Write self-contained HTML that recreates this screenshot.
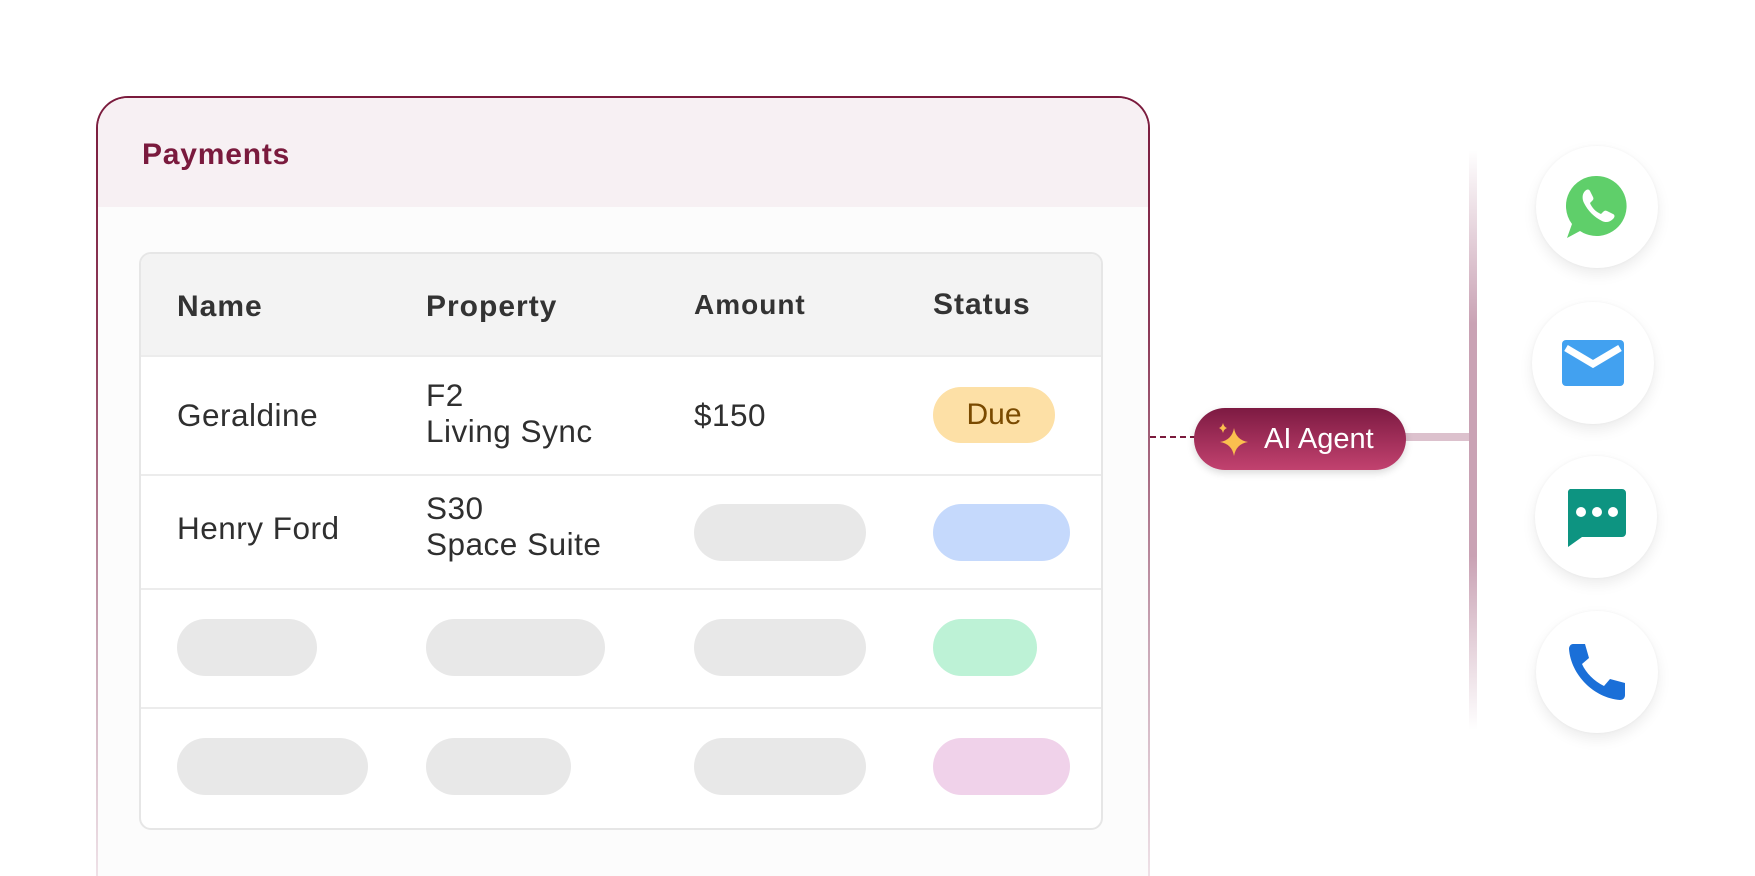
<!DOCTYPE html>
<html><head><style>
*{margin:0;padding:0;box-sizing:border-box}
html,body{width:1755px;height:876px;overflow:hidden}
body{background:#fff;position:relative;font-family:"Liberation Sans",Arial,sans-serif;color:#2f2f2f}
.card{position:absolute;left:96px;top:96px;width:1054px;height:782px;border-radius:32px 32px 0 0;padding:2px 2px 0 2px;background:linear-gradient(#7a1a3c 0%,#8c3a58 30%,#c9a7b6 70%,#efe2e8 100%)}
.cin{width:100%;height:100%;border-radius:30px 30px 0 0;background:#fcfcfc;overflow:hidden;position:relative}
.hdr{height:109px;background:#f7f0f3;position:relative}
.hdr span{position:absolute;left:44px;top:40px;font-size:30px;font-weight:bold;color:#7a1a3d;letter-spacing:0.8px}
.tbl{position:absolute;left:139px;top:252px;width:964px;height:578px;border:2px solid #e6e6e6;border-radius:12px;background:#fff;overflow:hidden}
.row{position:absolute;left:0;width:100%;border-top:2px solid #ececec}
.t{position:absolute;font-size:31.5px;line-height:36px;color:#2f2f2f;letter-spacing:0.5px}
.th{font-weight:bold;color:#333;font-size:30px;letter-spacing:1px}
.p{position:absolute;height:57px;border-radius:29px;background:#e8e8e8}
.circ{position:absolute;width:122px;height:122px;border-radius:50%;background:#fff;box-shadow:0 6px 14px rgba(0,0,0,.08),0 0 3px rgba(0,0,0,.04);display:flex;align-items:center;justify-content:center}
</style></head><body>
<div class="card"><div class="cin"><div class="hdr"><span>Payments</span></div></div></div>
<div class="tbl">
 <div style="position:absolute;left:0;top:0;width:100%;height:101px;background:#f3f3f3"></div>
 <div class="t th" style="left:36px;top:35px">Name</div>
 <div class="t th" style="left:285px;top:35px">Property</div>
 <div class="t th" style="left:553px;top:33px;font-size:28px">Amount</div>
 <div class="t th" style="left:792px;top:33px">Status</div>
 <div class="row" style="top:101px;height:119px">
  <div class="t" style="left:36px;top:40px">Geraldine</div>
  <div class="t" style="left:285px;top:20px">F2<br>Living Sync</div>
  <div class="t" style="left:553px;top:40px">$150</div>
  <div class="p" style="left:792px;top:30px;width:122px;height:56px;background:#fde0a6;color:#7a4a00;font-size:30px;text-align:center;line-height:56px">Due</div>
 </div>
 <div class="row" style="top:220px;height:114px">
  <div class="t" style="left:36px;top:34px">Henry Ford</div>
  <div class="t" style="left:285px;top:14px">S30<br>Space Suite</div>
  <div class="p" style="left:553px;top:28px;width:172px"></div>
  <div class="p" style="left:792px;top:28px;width:137px;background:#c5d9fc"></div>
 </div>
 <div class="row" style="top:334px;height:119px">
  <div class="p" style="left:36px;top:29px;width:140px"></div>
  <div class="p" style="left:285px;top:29px;width:179px"></div>
  <div class="p" style="left:553px;top:29px;width:172px"></div>
  <div class="p" style="left:792px;top:29px;width:104px;background:#bdf2d6"></div>
 </div>
 <div class="row" style="top:453px;height:125px">
  <div class="p" style="left:36px;top:29px;width:191px"></div>
  <div class="p" style="left:285px;top:29px;width:145px"></div>
  <div class="p" style="left:553px;top:29px;width:172px"></div>
  <div class="p" style="left:792px;top:29px;width:137px;background:#f0d2ea"></div>
 </div>
</div>
<div style="position:absolute;left:1150px;top:436px;width:46px;border-top:2px dashed #7a1a3c"></div>
<div style="position:absolute;left:1400px;top:433px;width:75px;height:8px;background:#dcc1cd"></div>
<div style="position:absolute;left:1469px;top:150px;width:8px;height:580px;background:linear-gradient(rgba(200,160,178,0),#c9a2b4 30%,#c9a2b4 70%,rgba(200,160,178,0))"></div>
<div style="position:absolute;left:1194px;top:408px;width:212px;height:62px;border-radius:31px;background:linear-gradient(#7d1a42,#c2426f);box-shadow:0 3px 8px rgba(0,0,0,.15);color:#fff;font-size:29px;line-height:62px;padding-left:70px">AI Agent
 <svg style="position:absolute;left:20px;top:14px" width="40" height="36" viewBox="0 0 40 36"><path d="M20 6 Q22 18 34 20 Q22 22 20 34 Q18 22 6 20 Q18 18 20 6Z" fill="#fbbf4f"/><path d="M9 1 Q10 5 13 6 Q10 7 9 11 Q8 7 5 6 Q8 5 9 1Z" fill="#fbbf4f"/></svg>
</div>
<div class="circ" style="left:1536px;top:146px"><svg width="66" height="66" viewBox="0 0 66 66"><path d="M33 2A30 30 0 1 1 16 57L3 64 8 50A30 30 0 0 1 33 2Z" fill="#5fcf6a"/><path d="M21 17c2-2 4-2 5 0l3 6c1 2 0 3-1 4l-2 2c2 5 6 9 11 11l2-2c1-1 2-2 4-1l6 3c2 1 2 3 0 5-3 3-7 4-11 2-8-4-14-10-18-18-2-4-2-9 1-12z" fill="#fff"/></svg></div>
<div class="circ" style="left:1532px;top:302px"><svg width="62" height="46" viewBox="0 0 62 46"><rect width="62" height="46" rx="4" fill="#42a1f0"/><path d="M4 8 31 24 58 8" stroke="#fff" stroke-width="7" fill="none"/></svg></div>
<div class="circ" style="left:1535px;top:456px"><svg width="60" height="60" viewBox="0 0 60 60"><path d="M4 2h52a4 4 0 0 1 4 4v40a4 4 0 0 1-4 4H16L2 60V6a4 4 0 0 1 2-4z" fill="#0d9481"/><circle cx="15" cy="25" r="5" fill="#fff"/><circle cx="31" cy="25" r="5" fill="#fff"/><circle cx="47" cy="25" r="5" fill="#fff"/></svg></div>
<div class="circ" style="left:1536px;top:611px"><svg width="60" height="60" viewBox="0 0 60 60"><path d="M6 2h12l4 14-7 6c4 9 12 17 22 22l6-7 15 4v12c0 3-2 5-5 5C27 56 4 33 2 7c0-3 2-5 4-5z" fill="#1a6fd8"/></svg></div>
</body></html>
